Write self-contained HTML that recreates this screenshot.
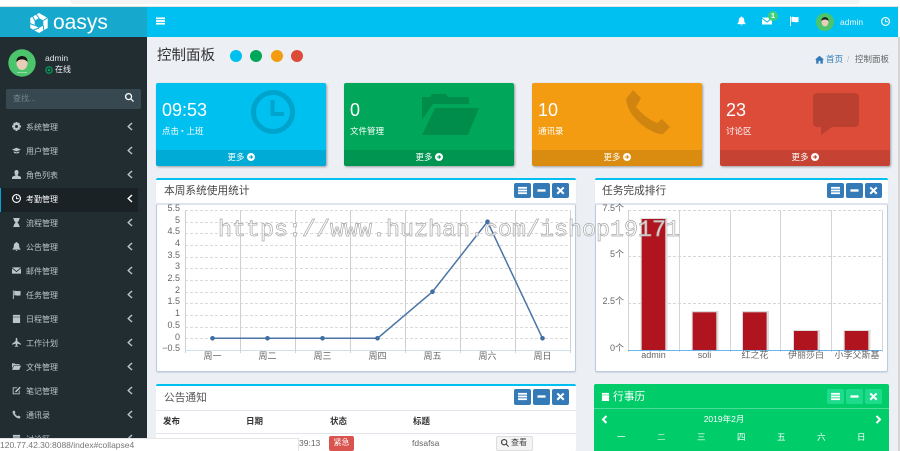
<!DOCTYPE html>
<html lang="zh"><head><meta charset="utf-8"><title>oasys</title>
<style>
*{box-sizing:border-box}
html,body{margin:0;padding:0;width:900px;height:451px;overflow:hidden;background:#fff}
body{position:relative;font-family:"Liberation Sans","Noto Sans CJK SC",sans-serif;color:#333}
.a{position:absolute;white-space:nowrap}
svg{display:block;overflow:visible}
.mi{position:absolute;left:0;width:147px;height:24px;line-height:24px;font-size:8px;color:#b8c7ce}
.mi b{position:absolute;left:26px;top:1px;font-weight:400}
.mi svg.ic{position:absolute;left:12px;top:7px;width:9px;height:9px;fill:#b8c7ce}
.mi svg.ch{position:absolute;left:127px;top:7px;width:6px;height:9px;fill:none;stroke:#b8c7ce;stroke-width:1.4}
.card{position:absolute;top:83px;width:170px;height:83px;border-radius:2px;color:#fff;box-shadow:1px 1px 2px rgba(0,0,0,.35);overflow:hidden}
.card .n{position:absolute;left:6px;top:16px;font-size:18px;line-height:22px}
.card .l{position:absolute;left:6px;top:42px;font-size:8.5px;line-height:12px}
.card .f{position:absolute;left:0;right:0;top:67px;height:16px;background:rgba(0,0,0,.1);font-size:8.5px;line-height:15px;text-align:center}
.card .f svg{display:inline-block;position:static;width:8px;height:8px;margin-left:2px;vertical-align:-1px}
.card>svg{position:absolute}
.panel{position:absolute;background:#fff;border-top:2px solid #00c0ef;border-radius:2px}
.title{position:absolute;font-size:10.7px;line-height:14px;color:#444;white-space:nowrap}
.btn{position:absolute;width:17px;height:15px;background:#337ab7;border-radius:2px}
.btn svg{position:absolute;left:4px;top:3px;width:9px;height:9px;fill:#fff}
.g .btn{background:#1edb8b}
.t{font-size:9px;fill:#666;font-family:"Liberation Sans","Noto Sans CJK SC",sans-serif}
</style></head><body>
<svg width="0" height="0" style="position:absolute"><defs>
<symbol id="i-bars" viewBox="0 0 10 10"><rect x="0" y="1" width="10" height="2"/><rect x="0" y="4" width="10" height="2"/><rect x="0" y="7" width="10" height="2"/></symbol>
<symbol id="i-min" viewBox="0 0 10 10"><rect x="0.5" y="3.7" width="9" height="2.6"/></symbol>
<symbol id="i-x" viewBox="0 0 10 10"><path d="M2.200.8 5 3.500 7.800.8l1.600 1.600L6.600 5l2.800 2.800-1.600 1.600L5 6.600 2.200 9.400.6 7.800 3.400 5 .6 2.400z"/></symbol>
<symbol id="i-gear" viewBox="0 0 10 10"><path fill-rule="evenodd" d="M4 0h2l.3 1.400 1.200-.7 1.400 1.400-.7 1.200L10 4v2l-1.800.3.700 1.200-1.400 1.400-1.200-.7L6 10H4l-.3-1.800-1.200.7-1.400-1.400.7-1.200L0 6V4l1.800-.7-.7-1.200 1.400-1.400 1.200.7zM5 3.300a1.700 1.700 0 1 0 0 3.400 1.700 1.700 0 0 0 0-3.400z"/></symbol>
<symbol id="i-cap" viewBox="0 0 10 10"><path d="M0 4 5 2l5 2-5 2zM2 6l3 1.200L8 6v1.500C7 8.500 3 8.500 2 7.500z"/></symbol>
<symbol id="i-user" viewBox="0 0 10 10"><path d="M5 0c1.500 0 2.300 1 2.300 2.500S6.500 5.500 6 6c1 .5 4 1 4 2.500V10H0V8.500C0 7 3 6.500 4 6c-.5-.5-1.300-2-1.300-3.500S3.500 0 5 0z"/></symbol>
<symbol id="i-clock" viewBox="0 0 10 10"><path fill-rule="evenodd" d="M5 0a5 5 0 1 1 0 10A5 5 0 0 1 5 0zm0 1.300a3.700 3.700 0 1 0 0 7.400 3.700 3.700 0 0 0 0-7.400zM4.500 2.500h1V4.700h2v1h-3z"/></symbol>
<symbol id="i-hour" viewBox="0 0 10 10"><path d="M1.500 0h7v1.200H8C8 3.500 6.500 4 6 5c.5 1 2 1.500 2 3.800h.5V10h-7V8.800H2C2 6.500 3.500 6 4 5 3.500 4 2 3.500 2 1.200h-.5z"/></symbol>
<symbol id="i-bell" viewBox="0 0 10 10"><path d="M5 0c.5 0 .8.300.8.800C7.500 1.200 8 2.500 8 4c0 2 .5 3 1.500 3.800V8.500h-9v-.7C1.500 7 2 6 2 4c0-1.500.5-2.800 2.200-3.200C4.200.3 4.500 0 5 0zM4 9h2a1 1 0 0 1-2 0z"/></symbol>
<symbol id="i-mail" viewBox="0 0 10 10"><path d="M0 1.500h10L5 5.500zM0 2.800V8.500h10V2.800L5 6.800z"/></symbol>
<symbol id="i-flag" viewBox="0 0 10 10"><path d="M1 .5h1V10H1zM2.500 1C4 .2 5.500 1.800 9.500 1v5c-4 .8-5.500-.8-7 0z"/></symbol>
<symbol id="i-cal" viewBox="0 0 10 10"><path d="M1 1h8v2H1zM1 3.600h8V10H1z"/></symbol>
<symbol id="i-plane" viewBox="0 0 10 10"><path d="M4.300 0h1.400l.3 3.500L10 6.500V7.500L6 6.300 5.800 8.500 7 9.500V10L5 9.500 3 10V9.500L4.200 8.500 4 6.300 0 7.500V6.500L4 3.500z"/></symbol>
<symbol id="i-folder" viewBox="0 0 10 10"><path d="M0 1.500h3l.7.8H8.500V3.500H2L0 7zM2.400 4H10L8 8.800H0z"/></symbol>
<symbol id="i-edit" viewBox="0 0 10 10"><path d="M.8 1.500H6L5 2.500H1.800V8.200H7.500V5.500l1-1V9.200H.8zM8.500.8 9.700 2 5 6.800 3.500 7 3.700 5.500z"/></symbol>
<symbol id="i-phone" viewBox="0 0 10 10"><path d="M2.400.4 3.900 2.600 3 3.600C3.600 5 5 6.400 6.400 7l1-.9 2.200 1.500-1.300 1.800C5 9.700.3 5 .6 1.700z"/></symbol>
<symbol id="i-search" viewBox="0 0 10 10"><path fill-rule="evenodd" d="M4 0a4 4 0 0 1 3.200 6.300L10 9l-1 1-2.700-2.800A4 4 0 1 1 4 0zm0 1.400a2.600 2.600 0 1 0 0 5.200 2.600 2.600 0 0 0 0-5.200z"/></symbol>
<symbol id="i-home" viewBox="0 0 10 10"><path d="M5 .8 10 5.200H8.700V9.600H6V6.500H4V9.600H1.300V5.200H0z"/></symbol>
<symbol id="i-more" viewBox="0 0 10 10"><path fill="#fff" fill-rule="evenodd" d="M5 0a5 5 0 1 1 0 10A5 5 0 0 1 5 0zM5.200 2.500 4.200 3.500 5 4.300H2.300V5.700H5L4.200 6.500 5.200 7.500 7.700 5z"/></symbol>
</defs></svg>

<!-- browser strip -->
<div class="a" style="left:70px;top:0;width:790px;height:4px;background:#f4f4f4;border-radius:0 0 8px 8px"></div>
<div class="a" style="left:0;top:6px;width:898px;height:1px;background:#e2e2e2"></div>

<!-- content bg -->
<div class="a" style="left:147px;top:37px;width:751px;height:414px;background:#ecf0f5"></div>
<div class="a" style="left:898px;top:37px;width:2px;height:414px;background:#d4d4d4"></div>

<!-- header -->
<div class="a" style="left:0;top:7px;width:147px;height:30px;background:#17a8ce"></div>
<div class="a" style="left:147px;top:7px;width:751px;height:30px;background:#00c0f1"></div>
<svg class="a" style="left:29px;top:12px" width="20" height="22" viewBox="0 0 20 22"><path fill="#fff" fill-rule="evenodd" d="M10 1 18.700 6V16L10 21 1.300 16V6zM10 6 5.700 8.500V13.500L10 16 14.300 13.500V8.500z"/><path d="M10 6 6.500 1.500M14.300 8.500 19 5.500M14.300 13.500 15 19M10 16 4.500 18M5.700 13.500 1 11.500M5.700 8.500 3.500 4" stroke="#17a8ce" stroke-width="1" fill="none"/></svg>
<div class="a" style="left:53px;top:10px;font-size:21px;line-height:26px;color:#fff">oasys</div>
<svg class="a" style="left:156px;top:16px;fill:#fff" width="9" height="10"><use href="#i-bars"/></svg>
<svg class="a" style="left:737px;top:16px;fill:#fff" width="9" height="10"><use href="#i-bell"/></svg>
<svg class="a" style="left:762px;top:16px;fill:#fff" width="10" height="10"><use href="#i-mail"/></svg>
<div class="a" style="left:768px;top:11px;width:10px;height:10px;border-radius:50%;background:#3dcf7b;color:#fff;font-size:7.500px;font-weight:700;line-height:10px;text-align:center">1</div>
<svg class="a" style="left:789px;top:16px;fill:#fff" width="10" height="10"><use href="#i-flag"/></svg>
<svg class="a" style="left:816px;top:13px" width="18" height="18" viewBox="0 0 18 18"><circle cx="9" cy="9" r="9" fill="#4cc46c"/><ellipse cx="9" cy="9" rx="3.500" ry="4.500" fill="#e9cdb8"/><path d="M5.500 8C5 3 13 3 12.500 8 11 6 7 6 5.500 8z" fill="#1a1a1a"/></svg>
<div class="a" style="left:840px;top:16px;font-size:8.500px;line-height:12px;color:#e8f8fd">admin</div>
<svg class="a" style="left:881px;top:17px;fill:#fff" width="9" height="9"><use href="#i-clock"/></svg>

<!-- sidebar -->
<div class="a" style="left:0;top:37px;width:147px;height:414px;background:#222d32"></div>
<svg class="a" style="left:8px;top:49px" width="28" height="28" viewBox="0 0 28 28"><circle cx="14" cy="14" r="13.700" fill="#4cc46c"/><ellipse cx="14" cy="14" rx="5.500" ry="7" fill="#e9cdb8"/><path d="M8.500 13C7.500 5 20.500 5 19.500 13 17 9.500 11 9.500 8.500 13z" fill="#151515"/><rect x="9" y="23" width="10" height="1" fill="#9adba9"/></svg>
<div class="a" style="left:45px;top:52px;font-size:8.500px;line-height:12px;color:#dfe6e9">admin</div>
<svg class="a" style="left:45px;top:66px" width="8" height="8" viewBox="0 0 8 8"><circle cx="4" cy="4" r="3.200" fill="none" stroke="#00a65a" stroke-width="1.100"/><circle cx="4" cy="4" r="1.300" fill="#00a65a"/></svg>
<div class="a" style="left:55px;top:64px;font-size:8px;line-height:12px;color:#f0f4f5">在线</div>
<div class="a" style="left:6px;top:89px;width:135px;height:20px;background:#374850;border-radius:2px"></div>
<div class="a" style="left:13px;top:93px;font-size:8px;line-height:12px;color:#76858c">查找...</div>
<svg class="a" style="left:125px;top:93px;fill:#fff" width="9" height="9"><use href="#i-search"/></svg>

<div class="a" style="left:0;top:188px;width:138px;height:24px;background:#1a2226;border-left:1px solid #00a5dd"></div>

<div class="mi" style="top:115px"><svg class="ic"><use href="#i-gear"/></svg><b>系统管理</b><svg class="ch" viewBox="0 0 6 9"><path d="M5 1 1.200 4.500 5 8"/></svg></div>
<div class="mi" style="top:139px"><svg class="ic"><use href="#i-cap"/></svg><b>用户管理</b><svg class="ch" viewBox="0 0 6 9"><path d="M5 1 1.200 4.500 5 8"/></svg></div>
<div class="mi" style="top:163px"><svg class="ic"><use href="#i-user"/></svg><b>角色列表</b><svg class="ch" viewBox="0 0 6 9"><path d="M5 1 1.200 4.500 5 8"/></svg></div>
<div class="mi" style="top:187px;color:#fff"><svg class="ic" style="fill:#fff"><use href="#i-clock"/></svg><b>考勤管理</b><svg class="ch" style="stroke:#fff" viewBox="0 0 6 9"><path d="M5 1 1.200 4.500 5 8"/></svg></div>
<div class="mi" style="top:211px"><svg class="ic"><use href="#i-hour"/></svg><b>流程管理</b><svg class="ch" viewBox="0 0 6 9"><path d="M5 1 1.200 4.500 5 8"/></svg></div>
<div class="mi" style="top:235px"><svg class="ic"><use href="#i-bell"/></svg><b>公告管理</b><svg class="ch" viewBox="0 0 6 9"><path d="M5 1 1.200 4.500 5 8"/></svg></div>
<div class="mi" style="top:259px"><svg class="ic"><use href="#i-mail"/></svg><b>邮件管理</b><svg class="ch" viewBox="0 0 6 9"><path d="M5 1 1.200 4.500 5 8"/></svg></div>
<div class="mi" style="top:283px"><svg class="ic"><use href="#i-flag"/></svg><b>任务管理</b><svg class="ch" viewBox="0 0 6 9"><path d="M5 1 1.200 4.500 5 8"/></svg></div>
<div class="mi" style="top:307px"><svg class="ic"><use href="#i-cal"/></svg><b>日程管理</b><svg class="ch" viewBox="0 0 6 9"><path d="M5 1 1.200 4.500 5 8"/></svg></div>
<div class="mi" style="top:331px"><svg class="ic"><use href="#i-plane"/></svg><b>工作计划</b><svg class="ch" viewBox="0 0 6 9"><path d="M5 1 1.200 4.500 5 8"/></svg></div>
<div class="mi" style="top:355px"><svg class="ic"><use href="#i-folder"/></svg><b>文件管理</b><svg class="ch" viewBox="0 0 6 9"><path d="M5 1 1.200 4.500 5 8"/></svg></div>
<div class="mi" style="top:379px"><svg class="ic"><use href="#i-edit"/></svg><b>笔记管理</b><svg class="ch" viewBox="0 0 6 9"><path d="M5 1 1.200 4.500 5 8"/></svg></div>
<div class="mi" style="top:403px"><svg class="ic"><use href="#i-phone"/></svg><b>通讯录</b><svg class="ch" viewBox="0 0 6 9"><path d="M5 1 1.200 4.500 5 8"/></svg></div>
<div class="mi" style="top:427px"><svg class="ic"><use href="#i-cal"/></svg><b>讨论区</b><svg class="ch" viewBox="0 0 6 9"><path d="M5 1 1.200 4.500 5 8"/></svg></div>

<!-- page heading -->
<div class="a" style="left:157px;top:46px;font-size:14.500px;line-height:20px;color:#333">控制面板</div>
<div class="a" style="left:230px;top:50px;width:12px;height:12px;border-radius:50%;background:#00c0ef"></div>
<div class="a" style="left:250px;top:50px;width:12px;height:12px;border-radius:50%;background:#00a65a"></div>
<div class="a" style="left:271px;top:50px;width:12px;height:12px;border-radius:50%;background:#f39c12"></div>
<div class="a" style="left:291px;top:50px;width:12px;height:12px;border-radius:50%;background:#dd4b39"></div>
<svg class="a" style="left:815px;top:55px;fill:#337ab7" width="9" height="9"><use href="#i-home"/></svg>
<div class="a" style="left:826px;top:53px;font-size:8.500px;line-height:12px;color:#337ab7">首页</div>
<div class="a" style="left:847px;top:53px;font-size:8.500px;line-height:12px;color:#bbb">/</div>
<div class="a" style="left:855px;top:53px;font-size:8.500px;line-height:12px;color:#666">控制面板</div>

<!-- cards -->
<div class="card" style="left:156px;background:#00c0ef">
<svg style="left:95px;top:7px" width="44" height="44" viewBox="0 0 44 44"><circle cx="22" cy="22" r="19.500" fill="none" stroke="#00a3cb" stroke-width="5"/><path d="M19.500 10h4v12h9.500v4H19.500z" fill="#00a3cb"/></svg>
<div class="n">09:53</div><div class="l">点击◔ 上班</div><div class="f">更多<svg><use href="#i-more"/></svg></div></div>
<div class="card" style="left:344px;background:#00a65a">
<svg style="left:78px;top:10px" width="58" height="42" viewBox="0 0 58 42"><path d="M0 4h8L10 1h14l2 3h21v7H11L0 27z" fill="#008d4c"/><path d="M13 15h44L46 42H0z" fill="#008d4c"/></svg>
<div class="n">0</div><div class="l">文件管理</div><div class="f">更多<svg><use href="#i-more"/></svg></div></div>
<div class="card" style="left:532px;background:#f39c12">
<svg style="left:94px;top:7px" width="44" height="45" viewBox="0 0 44 45"><path d="M7 0 15 8 10 17Q19 28 31 33L36 29 44 37 37 44Q30 45 16 35 2 24 0 9z" fill="#cf850f"/></svg>
<div class="n">10</div><div class="l">通讯录</div><div class="f">更多<svg><use href="#i-more"/></svg></div></div>
<div class="card" style="left:720px;background:#dd4b39">
<svg style="left:93px;top:10px" width="46" height="42" viewBox="0 0 46 42"><path d="M4 0h38a4 4 0 0 1 4 4v26a4 4 0 0 1-4 4H19L8 42V34H4a4 4 0 0 1-4-4V4a4 4 0 0 1 4-4z" fill="#bc4030"/></svg>
<div class="n">23</div><div class="l">讨论区</div><div class="f">更多<svg><use href="#i-more"/></svg></div></div>

<!-- panel 1 -->
<div class="panel" style="left:156px;top:178px;width:420px;height:194px;box-shadow:0 1px 1px rgba(0,0,0,.1)"></div>
<div class="a" style="left:156px;top:204px;width:420px;height:168px;border:1px solid #b9cbe0;border-radius:2px"></div>
<div class="a" style="left:156px;top:203px;width:420px;height:2px;background:#dfe3ee"></div>
<div class="title" style="left:164px;top:184px">本周系统使用统计</div>
<div class="btn" style="left:514px;top:183px"><svg><use href="#i-bars"/></svg></div>
<div class="btn" style="left:533px;top:183px"><svg><use href="#i-min"/></svg></div>
<div class="btn" style="left:552px;top:183px"><svg><use href="#i-x"/></svg></div>

<svg class="a" style="left:0;top:0" width="900" height="451">
<g stroke="#dadada" stroke-dasharray="3 2" stroke-width="1" shape-rendering="crispEdges">
<path d="M185 210.500H570M185 222.500H570M185 233.500H570M185 245.500H570M185 257.500H570M185 268.500H570M185 280.500H570M185 292.500H570M185 303.500H570M185 315.500H570M185 327.500H570M185 338.500H570"/>
</g>
<g stroke="#cfcfcf" stroke-width="1" shape-rendering="crispEdges">
<path d="M185.500 210V353M240.500 210V353M295.500 210V353M350.500 210V353M405.500 210V353M460.500 210V353M515.500 210V353M570.500 210V353"/>
</g>
<path d="M185 350.500H570" stroke="#cfe0ee" stroke-width="1"/>
<polyline points="212.500,338.300 267.500,338.300 322.500,338.300 377.500,338.300 432.500,291.700 487.500,221.700 542.500,338.300" fill="none" stroke="#4a74a6" stroke-width="1.500"/>
<g fill="#3f6ea3"><circle cx="212.500" cy="338.300" r="2.300"/><circle cx="267.500" cy="338.300" r="2.300"/><circle cx="322.500" cy="338.300" r="2.300"/><circle cx="377.500" cy="338.300" r="2.300"/><circle cx="432.500" cy="291.700" r="2.300"/><circle cx="487.500" cy="221.700" r="2.300"/><circle cx="542.500" cy="338.300" r="2.300"/></g>
<g class="t" text-anchor="end">
<text class="t" x="180" y="211">5.5</text><text class="t" x="180" y="223">5</text><text class="t" x="180" y="234">4.5</text><text class="t" x="180" y="246">4</text><text class="t" x="180" y="258">3.5</text><text class="t" x="180" y="269">3</text><text class="t" x="180" y="281">2.5</text><text class="t" x="180" y="293">2</text><text class="t" x="180" y="304">1.5</text><text class="t" x="180" y="316">1</text><text class="t" x="180" y="328">0.5</text><text class="t" x="180" y="340">0</text><text class="t" x="180" y="351">−0.5</text>
</g>
<g text-anchor="middle">
<text class="t" x="212.500" y="359">周一</text><text class="t" x="267.500" y="359">周二</text><text class="t" x="322.500" y="359">周三</text><text class="t" x="377.500" y="359">周四</text><text class="t" x="432.500" y="359">周五</text><text class="t" x="487.500" y="359">周六</text><text class="t" x="542.500" y="359">周日</text>
</g>
</svg>

<!-- panel 2 -->
<div class="panel" style="left:595px;top:178px;width:293px;height:194px;box-shadow:0 1px 1px rgba(0,0,0,.1)"></div>
<div class="a" style="left:595px;top:204px;width:293px;height:168px;border:1px solid #b9cbe0;border-radius:2px"></div>
<div class="a" style="left:595px;top:203px;width:293px;height:2px;background:#dfe3ee"></div>
<div class="title" style="left:602px;top:184px">任务完成排行</div>
<div class="btn" style="left:827px;top:183px"><svg><use href="#i-bars"/></svg></div>
<div class="btn" style="left:846px;top:183px"><svg><use href="#i-min"/></svg></div>
<div class="btn" style="left:865px;top:183px"><svg><use href="#i-x"/></svg></div>
<svg class="a" style="left:0;top:0" width="900" height="451">
<g stroke="#d6d6d6" stroke-dasharray="3 2" shape-rendering="crispEdges"><path d="M628 210.500H882M628 256.500H882M628 303.500H882"/></g>
<g stroke="#d4d4d4" shape-rendering="crispEdges"><path d="M628.500 210V352M679.500 210V352M730.500 210V352M780.500 210V352M831.500 210V352M882.500 210V352"/></g>
<g fill="#dcdcdc"><rect x="640.500" y="218" width="27" height="132"/><rect x="691.500" y="311" width="27" height="39"/><rect x="742" y="311" width="27" height="39"/><rect x="793" y="330" width="27" height="20"/><rect x="843.500" y="330" width="27" height="20"/></g>
<g fill="#b0151f"><rect x="641.700" y="219" width="23.600" height="131"/><rect x="692.700" y="312.300" width="23.600" height="37.700"/><rect x="743" y="312.300" width="23.600" height="37.700"/><rect x="794" y="331" width="23.600" height="19"/><rect x="844.700" y="331" width="23.600" height="19"/></g>
<path d="M628 350.500H882" stroke="#69b4ea" stroke-width="1"/>
<g text-anchor="end"><text class="t" x="624" y="211">7.5个</text><text class="t" x="624" y="257">5个</text><text class="t" x="624" y="304">2.5个</text><text class="t" x="624" y="351">0个</text></g>
<g text-anchor="middle"><text class="t" x="653.500" y="358">admin</text><text class="t" x="704.500" y="358">soli</text><text class="t" x="755" y="358">红之花</text><text class="t" x="806" y="358">伊丽莎白</text><text class="t" x="857" y="358">小李父斯基</text></g>
</svg>

<!-- watermark -->
<svg class="a" style="left:0;top:0" width="900" height="451"><text x="218" y="236" font-family="Liberation Mono,monospace" font-size="23.300" fill="#fff" fill-opacity=".8" stroke="#a8a8a8" stroke-width=".7" textLength="462" lengthAdjust="spacing">https://www.huzhan.com/ishop19171</text></svg>

<!-- panel 3 -->
<div class="panel" style="left:156px;top:384px;width:420px;height:67px"></div>
<div class="title" style="left:164px;top:391px;color:#555">公告通知</div>
<div class="btn" style="left:514px;top:389px;height:16px"><svg><use href="#i-bars"/></svg></div>
<div class="btn" style="left:533px;top:389px;height:16px"><svg><use href="#i-min"/></svg></div>
<div class="btn" style="left:552px;top:389px;height:16px"><svg><use href="#i-x"/></svg></div>
<div class="a" style="left:156px;top:410px;width:420px;height:1px;background:#e2e5ec"></div>
<div class="a" style="left:156px;top:433px;width:420px;height:1px;background:#e2e5ec"></div>
<div class="a" style="left:163px;top:415px;font-size:8.500px;line-height:12px;font-weight:700;color:#333">发布</div>
<div class="a" style="left:246px;top:415px;font-size:8.500px;line-height:12px;font-weight:700;color:#333">日期</div>
<div class="a" style="left:330px;top:415px;font-size:8.500px;line-height:12px;font-weight:700;color:#333">状态</div>
<div class="a" style="left:413px;top:415px;font-size:8.500px;line-height:12px;font-weight:700;color:#333">标题</div>
<div class="a" style="left:299px;top:437px;font-size:8.500px;line-height:12px;color:#666">39:13</div>
<div class="a" style="left:329px;top:436px;width:25px;height:15px;background:#d9534f;border-radius:2px;color:#fff;font-size:8px;line-height:14px;text-align:center">紧急</div>
<div class="a" style="left:412px;top:437px;font-size:8.500px;line-height:12px;color:#666">fdsafsa</div>
<div class="a" style="left:496px;top:436px;width:37px;height:15px;background:#f4f4f4;border:1px solid #ddd;border-radius:2px"></div>
<svg class="a" style="left:501px;top:439px;fill:#444" width="8" height="8"><use href="#i-search"/></svg>
<div class="a" style="left:511px;top:437px;font-size:8px;line-height:12px;color:#444">查看</div>

<!-- panel 4 -->
<div class="a g" style="left:594px;top:384px;width:295px;height:67px;background:#00cc6a;border-radius:2px 2px 0 0;color:#fff">
<div class="a" style="left:0;top:24px;width:295px;height:1px;background:#4bdc97"></div>
<svg class="a" style="left:7px;top:8px;fill:#fff" width="9" height="9"><use href="#i-cal"/></svg>
<div class="title" style="left:19px;top:6px;color:#fff">行事历</div>
<div class="btn" style="left:233px;top:5px"><svg><use href="#i-bars"/></svg></div>
<div class="btn" style="left:252px;top:5px"><svg><use href="#i-min"/></svg></div>
<div class="btn" style="left:271px;top:5px"><svg><use href="#i-x"/></svg></div>
<svg class="a" style="left:7px;top:31px" width="7" height="9" viewBox="0 0 7 9"><path d="M5.500 1 2 4.500 5.500 8" fill="none" stroke="#fff" stroke-width="2"/></svg>
<svg class="a" style="left:281px;top:31px" width="7" height="9" viewBox="0 0 7 9"><path d="M1.500 1 5 4.500 1.500 8" fill="none" stroke="#fff" stroke-width="2"/></svg>
<div class="a" style="left:130px;top:29px;width:0;display:flex;justify-content:center;font-size:8.500px;line-height:12px">2019年2月</div>
<div class="a" style="left:23px;top:47px;font-size:8.500px;line-height:12px">一</div>
<div class="a" style="left:63px;top:47px;font-size:8.500px;line-height:12px;opacity:.7">二</div>
<div class="a" style="left:103px;top:47px;font-size:8.500px;line-height:12px">三</div>
<div class="a" style="left:143px;top:47px;font-size:8.500px;line-height:12px">四</div>
<div class="a" style="left:183px;top:47px;font-size:8.500px;line-height:12px">五</div>
<div class="a" style="left:223px;top:47px;font-size:8.500px;line-height:12px">六</div>
<div class="a" style="left:263px;top:47px;font-size:8.500px;line-height:12px">日</div>
</div>

<!-- status bar -->
<div class="a" style="left:0;top:438px;width:299px;height:13px;background:#fff;border-top:1px solid #e4e4e4;border-right:1px solid #e4e4e4;font-size:8.500px;line-height:13px;color:#777;padding-left:0">120.77.42.30:8088/index#collapse4</div>
</body></html>
